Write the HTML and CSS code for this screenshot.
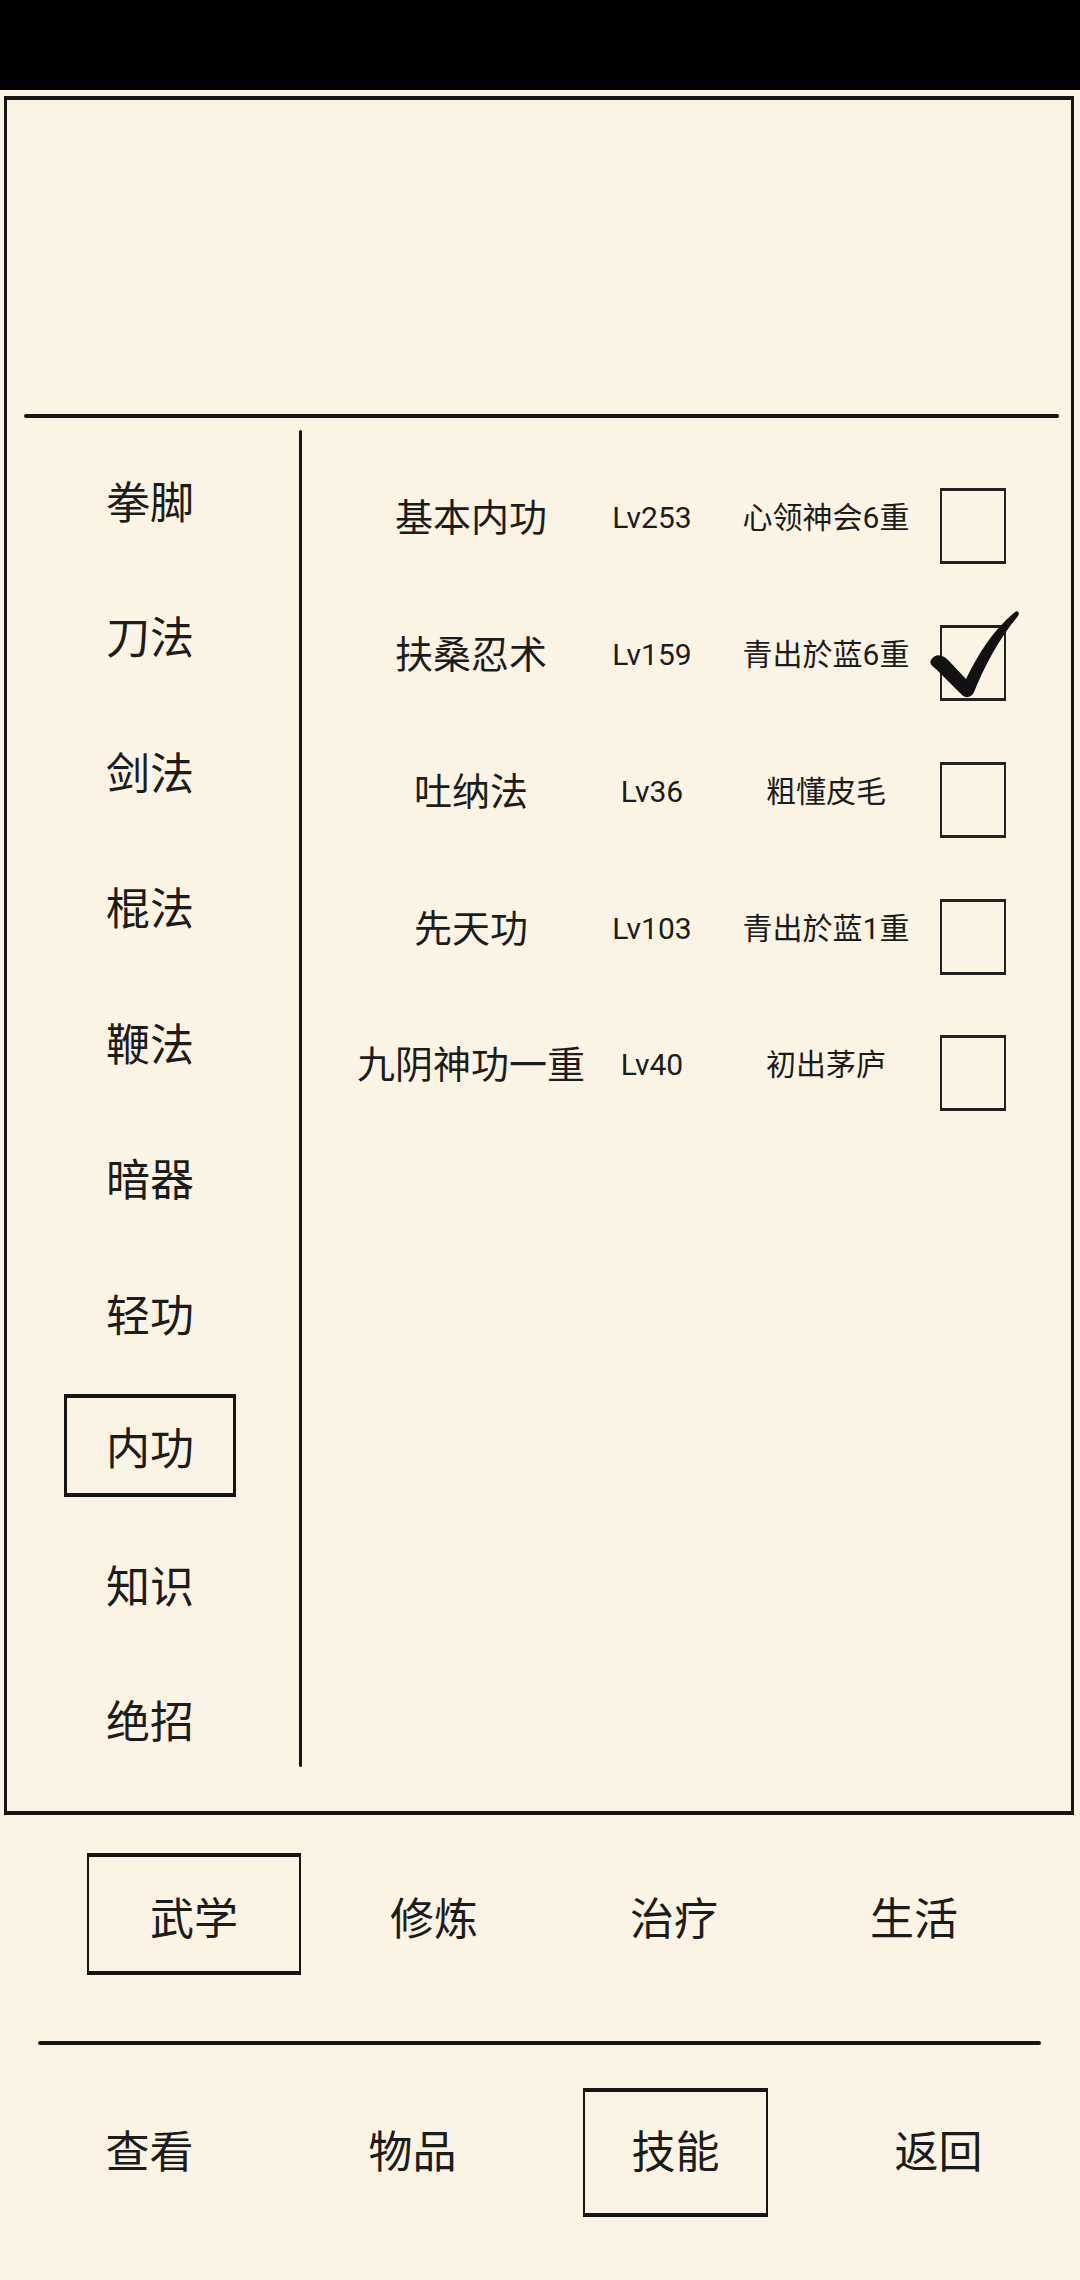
FILE: index.html
```html
<!DOCTYPE html>
<html lang="zh">
<head>
<meta charset="utf-8">
<title>技能</title>
<link rel="stylesheet" href="styles.css">
</head>
<body>
<div class="statusbar"></div>
<main class="panel">
  <div class="panel-top"></div>
  <div class="panel-sep"></div>
  <div class="panel-body">
    <ul class="cats">
      <li class="cat"><span>拳脚</span></li>
      <li class="cat"><span>刀法</span></li>
      <li class="cat"><span>剑法</span></li>
      <li class="cat"><span>棍法</span></li>
      <li class="cat"><span>鞭法</span></li>
      <li class="cat"><span>暗器</span></li>
      <li class="cat"><span>轻功</span></li>
      <li class="cat"><span class="cat-box">内功</span></li>
      <li class="cat"><span>知识</span></li>
      <li class="cat"><span>绝招</span></li>
    </ul>
    <div class="vdivider"></div>
    <div class="skills">
      <div class="skill"><span class="s-name">基本内功</span><span class="s-lv">Lv253</span><span class="s-rank">心领神会6重</span><span class="s-check"></span></div>
      <div class="skill"><span class="s-name">扶桑忍术</span><span class="s-lv">Lv159</span><span class="s-rank">青出於蓝6重</span><span class="s-check checked"><svg class="tick" viewBox="0 0 94 90" width="94" height="90"><path d="M3,51 C7,44 15,45 21,52 L38,70 C50,45 66,20 87,3 C90,1 92,4 90,7 C71,30 57,56 46,83 C44,88 38,90 34,86 L8,60 C4,57 1,55 3,51 Z" fill="#111"/></svg></span></div>
      <div class="skill"><span class="s-name">吐纳法</span><span class="s-lv">Lv36</span><span class="s-rank">粗懂皮毛</span><span class="s-check"></span></div>
      <div class="skill"><span class="s-name">先天功</span><span class="s-lv">Lv103</span><span class="s-rank">青出於蓝1重</span><span class="s-check"></span></div>
      <div class="skill"><span class="s-name">九阴神功一重</span><span class="s-lv">Lv40</span><span class="s-rank">初出茅庐</span><span class="s-check"></span></div>
    </div>
  </div>
</main>
<nav class="tabs">
  <div class="tab"><span class="tab-box">武学</span></div>
  <div class="tab"><span>修炼</span></div>
  <div class="tab"><span>治疗</span></div>
  <div class="tab"><span>生活</span></div>
</nav>
<div class="hline"></div>
<nav class="bottomnav">
  <div class="bn"><span>查看</span></div>
  <div class="bn"><span>物品</span></div>
  <div class="bn"><span class="bn-box">技能</span></div>
  <div class="bn"><span>返回</span></div>
</nav>
</body>
</html>
```
FILE: styles.css
```css
* { box-sizing: border-box; }
html, body {
  margin: 0;
  padding: 0;
  background: #fbf4e4;
}
body {
  width: 1080px;
  height: 2280px;
  overflow: hidden;
  font-family: Roboto, "Noto Sans CJK SC", sans-serif;
  color: #1c1c1c;
}
.statusbar {
  height: 90px;
  background: #000;
}
.panel {
  margin: 6px 6px 0 4px;
  height: 1719px;
  border-style: solid;
  border-color: #151515;
  border-width: 4px 3px 4px 3px;
  display: flex;
  flex-direction: column;
}
.panel-top {
  height: 314px;
  flex: none;
}
.panel-sep {
  height: 4px;
  margin: 0 12px 0 17px;
  background: #151515;
  border-radius: 2px;
  flex: none;
}
.panel-body {
  flex: 1;
  display: flex;
}
.cats {
  list-style: none;
  margin: 0;
  padding: 18px 0 0 0;
  width: 286px;
  flex: none;
}
.cat {
  height: 135.5px;
  display: flex;
  align-items: center;
  justify-content: center;
  font-size: 44px;
  line-height: 1;
}
.cat-box {
  width: 172px;
  height: 103px;
  margin-bottom: 14px;
  border-style: solid;
  border-color: #151515;
  border-width: 4px 3px 4px 3px;
  display: flex;
  align-items: center;
  justify-content: center;
  padding-top: 10px;
}
.vdivider {
  width: 3px;
  height: 1337px;
  margin: 12px 0 0 6px;
  background: #151515;
  border-radius: 2px;
  flex: none;
}
.skills {
  padding: 32px 0 0 41px;
  flex: 1;
}
.skill {
  height: 136.75px;
  display: flex;
  align-items: center;
  line-height: 1;
}
.s-name {
  width: 256px;
  text-align: center;
  font-size: 38px;
  white-space: nowrap;
}
.s-lv {
  width: 106px;
  text-align: center;
  font-size: 30px;
}
.s-rank {
  width: 200px;
  margin-left: 21px;
  text-align: center;
  font-size: 30px;
  white-space: nowrap;
}
.s-check {
  position: relative;
  width: 66px;
  height: 76px;
  margin: 16px 0 0 14px;
  border-style: solid;
  border-color: #222;
  border-width: 3px 2px 3px 2px;
}
.tick {
  position: absolute;
  left: -14px;
  top: -19px;
}
.tabs {
  margin-top: 38px;
  height: 122px;
  padding-left: 74px;
  display: flex;
}
.tab {
  width: 240px;
  display: flex;
  align-items: center;
  justify-content: center;
  font-size: 44px;
  line-height: 1;
  padding-top: 12px;
}
.tab:first-child {
  padding-top: 0;
}
.tab-box {
  width: 214px;
  height: 122px;
  border-style: solid;
  border-color: #151515;
  border-width: 4px 2px 4px 2px;
  display: flex;
  align-items: center;
  justify-content: center;
  padding-top: 12px;
}
.hline {
  height: 4px;
  margin: 66px 39px 0 38px;
  background: #151515;
  border-radius: 2px;
}
.bottomnav {
  margin-top: 43px;
  height: 129px;
  padding-left: 18px;
  display: flex;
}
.bn {
  width: 263px;
  display: flex;
  align-items: center;
  justify-content: center;
  font-size: 44px;
  line-height: 1;
}
.bn-box {
  width: 185px;
  height: 129px;
  border-style: solid;
  border-color: #151515;
  border-width: 4px 2px 4px 2px;
  display: flex;
  align-items: center;
  justify-content: center;
}
```
